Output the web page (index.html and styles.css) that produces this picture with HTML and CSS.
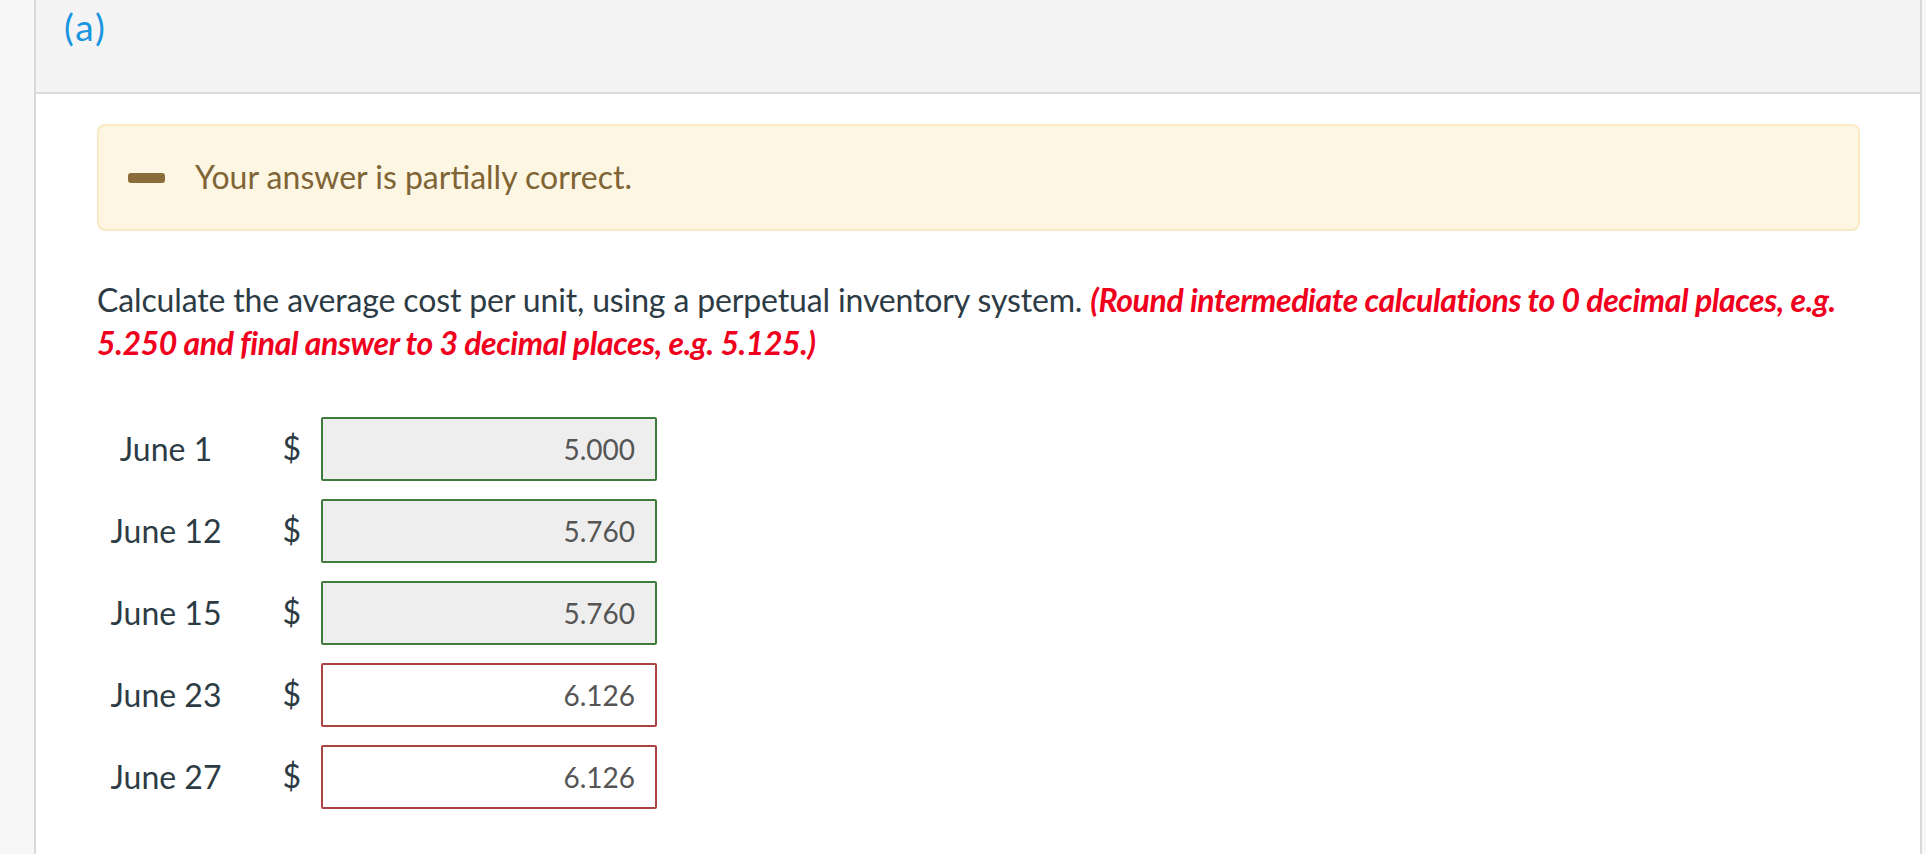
FILE: index.html
```html
<!DOCTYPE html>
<html lang="en">
<head>
<meta charset="utf-8">
<title>Question (a)</title>
<link rel="stylesheet" href="styles.css">
</head>
<body>
<div class="page">
  <div class="side"></div>
  <div class="panel">
    <div class="panel-head"><span class="part">(a)</span></div>
    <div class="panel-body">
      <div class="notice">
        <span class="minus"></span>
        <span class="notice-text">Your answer is partially correct.</span>
      </div>
      <p class="question">Calculate the average cost per unit, using a perpetual inventory system. <em class="hint">(Round intermediate calculations to 0 decimal places, e.g. 5.250 and final answer to 3 decimal places, e.g. 5.125.)</em></p>
      <div class="rows">
        <div class="row"><span class="label">June 1</span><span class="cur">$</span><span class="field ok">5.000</span></div>
        <div class="row"><span class="label">June 12</span><span class="cur">$</span><span class="field ok">5.760</span></div>
        <div class="row"><span class="label">June 15</span><span class="cur">$</span><span class="field ok">5.760</span></div>
        <div class="row"><span class="label">June 23</span><span class="cur">$</span><span class="field bad">6.126</span></div>
        <div class="row"><span class="label">June 27</span><span class="cur">$</span><span class="field bad">6.126</span></div>
      </div>
    </div>
  </div>
  <div class="side-r"></div>
</div>
</body>
</html>
```

FILE: styles.css
```css
html, body {
  margin: 0;
  padding: 0;
  background: #ffffff;
  font-family: Lato, "Open Sans", sans-serif;
}
.page {
  display: flex;
  width: 1926px;
  height: 854px;
  overflow: hidden;
}
.side {
  width: 34px;
  flex: none;
  background: #f7f7f7;
  border-right: 2px solid #d8d8d8;
}
.side-r {
  flex: 1;
  background: #f7f7f7;
  border-left: 2px solid #d8d8d8;
}
.panel {
  width: 1884px;
  flex: none;
  display: flex;
  flex-direction: column;
}
.panel-head {
  height: 94px;
  box-sizing: border-box;
  background: #f4f4f4;
  border-bottom: 2px solid #dcdcdc;
  padding: 5px 0 0 28px;
}
.part {
  font-size: 37px;
  line-height: 44px;
  letter-spacing: 2px;
  color: #1a95e0;
}
.panel-body {
  padding: 30px 60px 0 61px;
}
.notice {
  height: 107px;
  box-sizing: border-box;
  background: #fdf6e3;
  border: 2px solid #fbe9c6;
  border-radius: 8px;
  display: flex;
  align-items: center;
  padding-left: 29px;
  gap: 30px;
}
.minus {
  width: 37px;
  height: 10px;
  border-radius: 3px;
  background: #8a6d3b;
  flex: none;
}
.notice-text {
  font-size: 32px;
  color: #7f6436;
  padding-bottom: 2px;
}
.question {
  margin: 47px 0 0 0;
  font-size: 32px;
  line-height: 43px;
  color: #2d3b45;
  letter-spacing: -0.14px;
}
.hint {
  font-weight: 700;
  font-style: italic;
  color: #f0001c;
  letter-spacing: -0.4px;
}
.rows {
  margin-top: 53px;
  display: flex;
  flex-direction: column;
  gap: 18px;
}
.row {
  display: flex;
  align-items: center;
  height: 64px;
}
.label {
  width: 138px;
  text-align: center;
  font-size: 32px;
  color: #2d3b45;
  padding-bottom: 2px;
}
.cur {
  width: 66px;
  text-align: right;
  font-size: 32px;
  color: #2d3b45;
  padding-bottom: 4px;
}
.field {
  margin-left: 20px;
  width: 336px;
  height: 64px;
  box-sizing: border-box;
  border-radius: 2px;
  display: flex;
  align-items: center;
  justify-content: flex-end;
  padding-right: 20px;
  font-size: 28px;
  color: #555555;
}
.field.ok {
  background: #eeeeee;
  border: 2px solid #3f7b3d;
}
.field.bad {
  background: #ffffff;
  border: 2px solid #a94442;
}
```
